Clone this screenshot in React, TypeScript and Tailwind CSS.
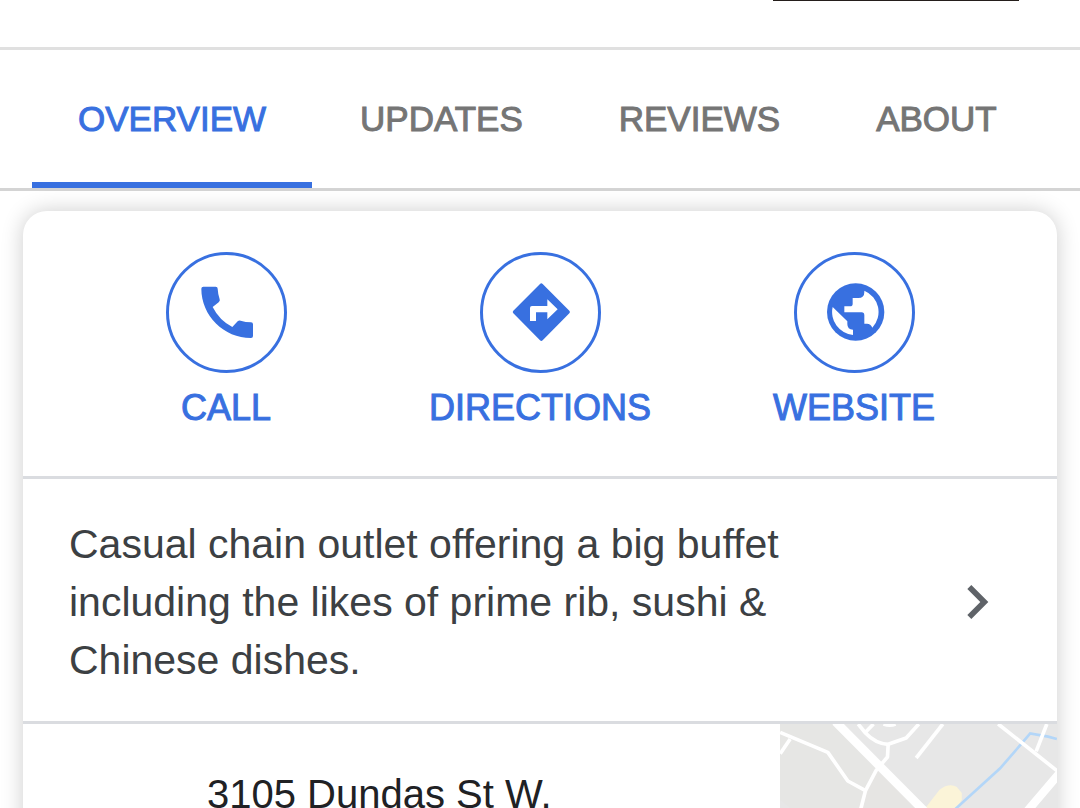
import type { ReactNode } from "react";
import { MdChevronRight } from "react-icons/md";

const tabs = ["OVERVIEW", "UPDATES", "REVIEWS", "ABOUT"];

const actions: { label: string; icon: ReactNode }[] = [
  {
    label: "CALL",
    icon: (
      <svg viewBox="-6 0 195 195" className="size-[65px]" fill="currentColor" aria-hidden="true">
        <path d="M22 20H59Q65 20 65 26Q66 43 71 58Q73 63 68 67L50 81Q70 121 109 141L125 124Q129 120 134 122Q149 127 165 127Q171 127 171 133V168Q171 174 165 174C84 174 16 107 16 26Q16 20 22 20Z" />
      </svg>
    ),
  },
  {
    label: "DIRECTIONS",
    icon: (
      <svg viewBox="0 0 195 195" className="size-[65px]" aria-hidden="true">
        <path
          d="M96 12Q100 8 104 12L184 92Q188 96 184 100L104 181Q100 185 96 181L16 100Q12 96 16 92Z"
          fill="currentColor"
        />
        <path d="M66 123V84Q66 78 72 78H118V58L149 88L118 118V97H84V123Z" fill="#ffffff" />
      </svg>
    ),
  },
  {
    label: "WEBSITE",
    icon: (
      <svg viewBox="0 0 195 195" className="size-[65px]" aria-hidden="true">
        <circle cx="101" cy="96" r="86" fill="currentColor" />
        <path
          d="M32 81L76 124V132Q76 149 93 149V165A69 69 0 0 1 32 81ZM127 32A69 69 0 0 1 151 143Q146 131 135 131H127V106Q127 97 119 97H67V79H84Q92 79 92 71V54H109Q127 54 127 36Z"
          fill="#ffffff"
        />
      </svg>
    ),
  },
];

function Tabs() {
  return (
    <nav className="flex border-y-3 border-t-[#e0e0e0] border-b-[#d4d4d4] px-8">
      {tabs.map((tab, i) => (
        <a
          key={tab}
          href={`#${tab.toLowerCase()}`}
          aria-current={i === 0 ? "page" : undefined}
          className={
            i === 0
              ? "border-b-6 border-[#3870e0] px-[46px] pt-[49px] pb-[43px] text-[35px] leading-10 text-[#3870e0] [-webkit-text-stroke:1px]"
              : "border-b-6 border-transparent px-12 pt-[49px] pb-[43px] text-[35px] leading-10 text-[#757575] [-webkit-text-stroke:1px]"
          }
        >
          {tab}
        </a>
      ))}
    </nav>
  );
}

function Actions() {
  return (
    <div className="grid grid-cols-3 px-[46px] pt-[41px] pb-12">
      {actions.map(({ label, icon }) => (
        <button
          key={label}
          type="button"
          className="flex flex-col items-center gap-[15px] text-[36px] leading-10 text-[#3870e0] [-webkit-text-stroke:1px]"
        >
          <span className="flex size-[121px] items-center justify-center rounded-full border-3 border-[#3870e0]">
            {icon}
          </span>
          {label}
        </button>
      ))}
    </div>
  );
}

function MapPreview() {
  return (
    <svg
      viewBox="62 73 830 600"
      className="h-[200px] w-[277px] shrink-0 bg-[#e7e7e7]"
      role="img"
      aria-label="Map"
    >
      <path d="M62 73H235L350 200L320 275L300 400H190L62 300Z" fill="#e6e6e4" />
      <path d="M350 210L490 324L560 400H300L320 275Z" fill="#e6e5e3" />
      <path d="M490 335L540 270Q570 248 592 262L607 280V300L590 330L560 400H480Z" fill="#fbf4d8" />
      <path
        d="M892 118L866 111L812 101L786 132L722 206L592 324L500 408"
        fill="none"
        stroke="#b3d6f8"
        strokeWidth="8"
      />
      <g fill="none" stroke="#ffffff" strokeWidth="11" strokeLinejoin="round">
        <path d="M62 98L205 158L265 244L318 273" />
        <path d="M62 162L92 118" />
        <path d="M296 73L318 100Q348 132 386 134L440 115L478 73" />
        <path d="M318 98L342 73" />
        <path d="M386 134L384 172L350 212L318 273L302 335L290 400" />
        <path d="M372 73Q392 80 408 73" />
        <path d="M550 73L470 175" />
        <path d="M716 73L892 213" />
        <path d="M862 73L830 155" />
      </g>
      <path d="M228 66L490 330L600 440" fill="none" stroke="#ffffff" strokeWidth="26" />
      <path d="M904 216L812 324L740 410" fill="none" stroke="#ffffff" strokeWidth="25" />
    </svg>
  );
}

export default function App() {
  return (
    <main className="h-screen overflow-hidden bg-white font-['Liberation_Sans',Arial,sans-serif]">
      <header className="flex h-[47px] justify-end pr-[61px]">
        <div className="h-px w-[246px] bg-[#241e1b]" />
      </header>
      <Tabs />
      <section className="mx-[23px] mt-5 overflow-hidden rounded-t-3xl bg-white shadow-[0_0_22px_rgba(0,0,0,0.2)]">
        <Actions />
        <a
          href="#about"
          className="flex items-center justify-between border-y-3 border-[#dadce0] pt-9 pb-8 pr-[46px] pl-[46px] text-[#3c4043]"
        >
          <p className="w-[730px] text-[41px] leading-[58px]">
            Casual chain outlet offering a big buffet including the likes of prime rib, sushi &amp;
            Chinese dishes.
          </p>
          <MdChevronRight className="size-[68px] text-[#5f6368]" aria-hidden="true" />
        </a>
        <div className="flex justify-between">
          <address className="pt-[41px] pl-46 text-[40px] leading-[58px] text-[#202124] not-italic">
            3105 Dundas St W.
          </address>
          <MapPreview />
        </div>
      </section>
    </main>
  );
}
